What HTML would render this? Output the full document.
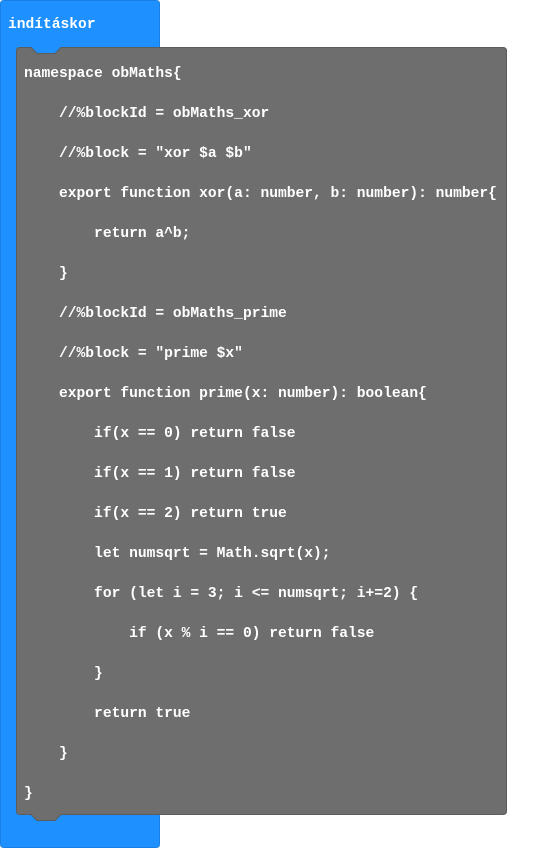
<!DOCTYPE html>
<html><head><meta charset="utf-8"><style>
html,body{margin:0;padding:0;background:#fff;width:559px;height:848px;overflow:hidden;position:relative}
svg{position:absolute;left:0;top:0}
.t{position:absolute;font-family:"Liberation Mono",monospace;font-weight:bold;font-size:14.6px;color:#fff;white-space:pre;line-height:20px}
</style></head><body>
<svg width="559" height="848">
<path d="M4,0.5 H156 Q159.5,0.5 159.5,4 V60 H30 V808 H156 Q159.5,808 159.5,812 V844 Q159.5,847.5 156,847.5 H4 Q0.5,847.5 0.5,844 V4 Q0.5,0.5 4,0.5 Z" fill="#1e90ff" stroke="#1a7fe0" stroke-width="1"/>
<path d="M20,47.5 H31 L37,53.5 H55 L61,47.5 H503 Q506.5,47.5 506.5,51 V811 Q506.5,814.5 503,814.5 H61 L55,820.5 H37 L31,814.5 H20 Q16.5,814.5 16.5,811 V51 Q16.5,47.5 20,47.5 Z" fill="#6e6e6e" stroke="#5c5c5c" stroke-width="1"/>
</svg>
<div class="t" style="left:8px;top:15px">indításkor</div>
<div class="t" style="left:24px;top:64px">namespace obMaths{

    //%blockId = obMaths_xor

    //%block = "xor $a $b"

    export function xor(a: number, b: number): number{

        return a^b;

    }

    //%blockId = obMaths_prime

    //%block = "prime $x"

    export function prime(x: number): boolean{

        if(x == 0) return false

        if(x == 1) return false

        if(x == 2) return true

        let numsqrt = Math.sqrt(x);

        for (let i = 3; i &lt;= numsqrt; i+=2) {

            if (x % i == 0) return false

        }

        return true

    }

}</div>
</body></html>
